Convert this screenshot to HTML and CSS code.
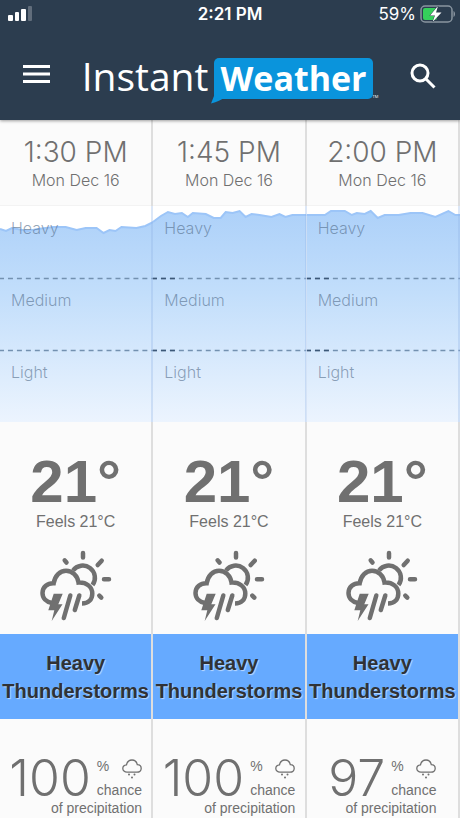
FILE: index.html
```html
<!DOCTYPE html>
<html lang="en">
<head>
    <meta charset="utf-8" />
    <meta name="viewport" content="width=device-width, initial-scale=1" />

    <title>Instant Weather</title>

    <link rel="stylesheet" href="styles.css">
</head>
<body>
    <svg class="defs" width="0" height="0">
        <defs>
            <linearGradient id="rain-fill" x1="0" y1="0" x2="0" y2="216" gradientUnits="userSpaceOnUse">
                <stop offset="0" stop-color="#acd0f9" />
                <stop offset="0.4" stop-color="#c2defb" />
                <stop offset="1" stop-color="#ecf4fe" />
            </linearGradient>
        </defs>
        <symbol id="storm" viewBox="0 0 72 72">
            <g fill="none" stroke="currentColor" stroke-width="4.500" stroke-linecap="round">
                <path d="M43 3v4.500M24.700 10.300l1.800 2.200M57.700 15l4-4.300M64 29.300h5M59.300 45.600l2 2" />
                <path stroke-linecap="butt" d="M33 20.500A12 12 0 1 1 52.500 35" />
                <path stroke-linecap="butt" d="M12 53C6 52 2.500 48 2.500 43C2.500 37 7.500 33 13.700 33.200C15 25.500 20 20.800 26 20.800C32.500 20.800 37.500 25.500 38.500 32.500C46.500 32 52.300 37 52.300 43.500C52.300 49.500 48.500 53.500 42 53.500" />
                <path d="M30.300 45.500l-6.500 22.500M39.300 45.500l-4.500 14.500" />
            </g>
            <path fill="currentColor" d="M13.700 43.700h9l-4.400 10.600h4.200L11.700 71l2.600-10.700h-6z" />
        </symbol>
        <symbol id="drizzle" viewBox="0 0 20 20">
            <path fill="none" stroke="currentColor" stroke-width="1.300" d="M5 13.200C2.500 13.200 .8 11.500 .8 9.500C.8 7.400 2.400 6 4.500 5.800C5.200 2.700 7.300 1 10 1C12.700 1 14.700 2.800 15.300 5.700C17.700 5.800 19.200 7.400 19.200 9.500C19.200 11.700 17.500 13.200 15 13.200z" />
            <g fill="currentColor">
                <circle cx="7" cy="15.500" r="1" />
                <circle cx="12.500" cy="15.500" r="1" />
                <circle cx="10" cy="18.500" r="1" />
            </g>
        </symbol>
    </svg>

    <header>
        <div class="status">
            <svg class="signal" width="25" height="16" viewBox="0 0 25 16" fill="#fff">
                <rect x="0" y="9" width="5" height="6" rx="1" />
                <rect x="7" y="6" width="4" height="9" rx="1" />
                <rect x="13" y="3" width="5" height="12" rx="1" />
                <rect x="20" y="0" width="4" height="15" rx="1" opacity="0.25" />
            </svg>
            <div class="clock">2:21 PM</div>
            <div class="battery">
                59%
                <svg width="36" height="18" viewBox="0 0 36 18">
                    <rect x="1" y="1" width="31" height="16" rx="4" fill="none" stroke="#8995a0" stroke-width="1.500" />
                    <path d="M33.500 6c2 1 2 5 0 6z" fill="#8995a0" />
                    <rect x="3" y="3" width="14" height="12" rx="2" fill="#35cf5b" />
                    <path d="M18 1l-8 9.500h5l-2.500 6.500 9-9.500h-5.500z" fill="#fff" stroke="#2c3d4f" stroke-width="1" paint-order="stroke" />
                </svg>
            </div>
        </div>
        <div class="bar">
            <button class="icon" aria-label="Menu">
                <svg width="28" height="28" viewBox="0 0 28 28" stroke="#fff" stroke-width="3">
                    <path d="M1 4.500h27M1 12h27M1 19.500h27" />
                </svg>
            </button>
            <a class="logo" href="#">
                <span class="instant">Instant</span>
                <span class="weather">
                    <svg class="tail" width="16" height="16" viewBox="0 0 16 16"><path d="M3 0V8L0 15.500Q9 13 14 9V0z" fill="#0a94dc" /></svg>
                    Weather
                </span>
                <span class="tm">TM</span>
            </a>
            <button class="icon" aria-label="Search">
                <svg width="28" height="28" viewBox="0 0 28 28" fill="none" stroke="#fff" stroke-width="3">
                    <circle cx="10" cy="11" r="8" />
                    <path d="M15.500 16.500l9 9" />
                </svg>
            </button>
        </div>
    </header>

    <main>
        <section class="slot">
            <div class="when">
                <h2>1:30 PM</h2>
                <p>Mon Dec 16</p>
            </div>
            <div class="chart">
                <svg viewBox="0 0 154 216" preserveAspectRatio="none">
                    <path class="area" d="M0 23L6 25L12 22L28 25L38 23L54 21L66 21L77 24L86 22L97 22L104 27L110 24L116 25L122 21L137 22L146 20L154 16V216H0z" />
                    <path class="edge" d="M0 23L6 25L12 22L28 25L38 23L54 21L66 21L77 24L86 22L97 22L104 27L110 24L116 25L122 21L137 22L146 20L154 16" />
                    <path class="dash" d="M-1 72.500H154M-1 144.500H154" />
                </svg>
                <div class="level">Heavy</div>
                <div class="level">Medium</div>
                <div class="level">Light</div>
            </div>
            <div class="now">
                <div class="temp">21°</div>
                <p>Feels 21°C</p>
                <svg class="storm"><use href="#storm" /></svg>
            </div>
            <h3>Heavy Thunderstorms</h3>
            <div class="rain">
                <div class="chance">
                    <strong>100</strong>
                    <div class="side">
                        <div class="unit">% <svg class="drizzle"><use href="#drizzle" /></svg></div>
                        <div>chance</div>
                    </div>
                </div>
                <p>of precipitation</p>
            </div>
        </section>

        <section class="slot">
            <div class="when">
                <h2>1:45 PM</h2>
                <p>Mon Dec 16</p>
            </div>
            <div class="chart">
                <svg viewBox="0 0 154 216" preserveAspectRatio="none">
                    <path class="area" d="M0 16L8 10L15 6L22 8L29 7L35 11L40 7L53 8L61 12L68 12L73 6L80 7L87 5L93 11L99 8L107 9L119 11L127 8L133 11L140 9H154V216H0z" />
                    <path class="edge" d="M0 16L8 10L15 6L22 8L29 7L35 11L40 7L53 8L61 12L68 12L73 6L80 7L87 5L93 11L99 8L107 9L119 11L127 8L133 11L140 9H154" />
                    <path class="dash" d="M-1 72.500H154M-1 144.500H154" />
                    <path class="dash overlap" d="M-1 72.500H22M-1 144.500H22" />
                </svg>
                <div class="level">Heavy</div>
                <div class="level">Medium</div>
                <div class="level">Light</div>
            </div>
            <div class="now">
                <div class="temp">21°</div>
                <p>Feels 21°C</p>
                <svg class="storm"><use href="#storm" /></svg>
            </div>
            <h3>Heavy Thunderstorms</h3>
            <div class="rain">
                <div class="chance">
                    <strong>100</strong>
                    <div class="side">
                        <div class="unit">% <svg class="drizzle"><use href="#drizzle" /></svg></div>
                        <div>chance</div>
                    </div>
                </div>
                <p>of precipitation</p>
            </div>
        </section>

        <section class="slot">
            <div class="when">
                <h2>2:00 PM</h2>
                <p>Mon Dec 16</p>
            </div>
            <div class="chart">
                <svg viewBox="0 0 154 216" preserveAspectRatio="none">
                    <path class="area" d="M0 9H18L24 5H38L45 9L50 7L58 8L64 5L71 12L78 9L92 9L104 7L116 7L129 11L142 5L149 9H154V216H0z" />
                    <path class="edge" d="M0 9H18L24 5H38L45 9L50 7L58 8L64 5L71 12L78 9L92 9L104 7L116 7L129 11L142 5L149 9H154" />
                    <path class="dash" d="M-1 72.500H154M-1 144.500H154" />
                    <path class="dash overlap" d="M-1 72.500H22M-1 144.500H22" />
                </svg>
                <div class="level">Heavy</div>
                <div class="level">Medium</div>
                <div class="level">Light</div>
            </div>
            <div class="now">
                <div class="temp">21°</div>
                <p>Feels 21°C</p>
                <svg class="storm"><use href="#storm" /></svg>
            </div>
            <h3>Heavy Thunderstorms</h3>
            <div class="rain">
                <div class="chance">
                    <strong>97</strong>
                    <div class="side">
                        <div class="unit">% <svg class="drizzle"><use href="#drizzle" /></svg></div>
                        <div>chance</div>
                    </div>
                </div>
                <p>of precipitation</p>
            </div>
        </section>
    </main>
</body>
</html>
```

FILE: styles.css
```css
* {
    box-sizing: border-box;
}

body {
    display: flex;
    flex-direction: column;
    min-height: 100vh;
    margin: 0;
    background: #fbfbfb;
    color: #707070;
    font-family: "Liberation Sans", Arial, Helvetica, sans-serif;
}

h2, h3, p {
    margin: 0;
}

.defs {
    position: absolute;
}

/* header */

header {
    height: 120px;
    background: #2c3d4f;
    color: #fff;
    box-shadow: 0 1px 3px #00000060;
    z-index: 1;
}

.status {
    display: grid;
    grid-template-columns: 1fr auto 1fr;
    align-items: center;
    height: 28px;
    padding: 0 8px;
    font: 400 17px/28px Inter, "Liberation Sans", sans-serif;
}

.clock {
    font-weight: 600;
}

.battery {
    display: flex;
    align-items: center;
    justify-content: flex-end;
    gap: 4px;
    margin-right: -4px;
}

.bar {
    display: flex;
    align-items: center;
    justify-content: space-between;
    height: 92px;
    padding: 4px 22px 0;
}

.icon {
    padding: 0;
    border: 0;
    background: none;
    cursor: pointer;
}

.icon svg {
    display: block;
}

.logo {
    display: flex;
    align-items: center;
    color: #fff;
    font-family: "Open Sans", "Noto Sans", sans-serif;
    text-decoration: none;
}

.instant {
    font-size: 39px;
    line-height: 42px;
}

.weather {
    position: relative;
    margin: 4px 0 0 6px;
    padding: 0 6px;
    border-radius: 5px;
    background: #0a94dc;
    font-size: 34px;
    font-weight: 700;
    line-height: 41px;
}

.tail {
    position: absolute;
    left: -3px;
    bottom: -5px;
    z-index: -1;
}

.tm {
    align-self: flex-end;
    font-size: 4px;
    line-height: 4px;
}

/* forecast columns */

main {
    display: grid;
    grid-template-columns: repeat(3, 1fr);
    flex: 1;
}

.slot {
    border-right: 2px solid #dedede;
    text-align: center;
}

.when {
    height: 86px;
    padding-top: 15px;
    border-bottom: 1px solid #f3f3f3;
    font-family: Inter, "Liberation Sans", sans-serif;
    font-weight: 300;
}

.when h2 {
    font-size: 28px;
    font-weight: 300;
    line-height: 34px;
}

.when p {
    font-size: 16px;
    line-height: 22px;
}

.chart {
    position: relative;
    margin-right: -2px;
    background: #fff;
}

.chart svg {
    position: absolute;
    width: 100%;
    height: 100%;
    left: 0;
    top: 0;
}

.area {
    fill: url(#rain-fill);
}

.edge {
    fill: none;
    stroke: #9cc5f8;
    stroke-width: 2;
}

.dash {
    fill: none;
    stroke: #7391b0;
    stroke-width: 1.5;
    stroke-dasharray: 5 4;
}

.overlap {
    stroke: #3c5878;
}

.level {
    position: relative;
    height: 72px;
    padding: 12px 11px;
    border-right: 2px solid #90b4e450;
    color: #506a8898;
    font: 300 16px/20px Inter, "Liberation Sans", sans-serif;
    text-align: left;
}

.now {
    padding: 30px 0 12px;
}

.temp {
    font-size: 60px;
    font-weight: 700;
    line-height: 60px;
}

.now p {
    font-size: 16px;
    line-height: 20px;
}

.storm {
    display: block;
    width: 72px;
    height: 72px;
    margin: 18px auto 0;
}

h3 {
    padding: 15px 0 14px;
    background: #66aaff;
    color: #303235;
    font-size: 20px;
    line-height: 28px;
    text-shadow: 1px 1px 1px #ffffff90;
}

.rain {
    width: fit-content;
    margin: 38px auto 0;
    font-size: 14px;
    line-height: 18px;
    text-align: right;
}

.chance {
    display: flex;
    gap: 6px;
}

.chance strong {
    font: 300 50px/42px Inter, "Liberation Sans", sans-serif;
}

.unit {
    display: flex;
    justify-content: space-between;
    height: 24px;
}

.drizzle {
    width: 20px;
    height: 20px;
    margin-top: 2px;
}
```
